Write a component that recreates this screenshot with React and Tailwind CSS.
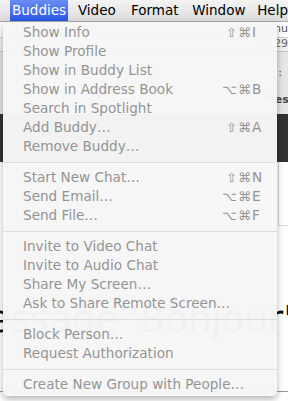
import React from "react";

const font = { fontFamily: '"DejaVu Sans", "Liberation Sans", sans-serif' };

const sections = [
  [
    ["Show Info", "⇧⌘", "I"],
    ["Show Profile"],
    ["Show in Buddy List"],
    ["Show in Address Book", "⌥⌘", "B"],
    ["Search in Spotlight"],
    ["Add Buddy…", "⇧⌘", "A"],
    ["Remove Buddy…"],
  ],
  [
    ["Start New Chat…", "⇧⌘", "N"],
    ["Send Email…", "⌥⌘", "E"],
    ["Send File…", "⌥⌘", "F"],
  ],
  [
    ["Invite to Video Chat"],
    ["Invite to Audio Chat"],
    ["Share My Screen…"],
    ["Ask to Share Remote Screen…"],
  ],
  [["Block Person…"], ["Request Authorization"]],
  [["Create New Group with People…"]],
];

function Item({ label, mods, key2 }) {
  return (
    <div className="flex h-[19px] items-center pl-[20px] pr-[13px] text-[13.6px] leading-none text-[#949494]">
      <span className="flex-1 whitespace-nowrap">{label}</span>
      {mods && (
        <span className="flex items-center">
          <span className="text-[13px] tracking-[1px]">{mods}</span>
          <span className="w-[12px] text-left text-[13.6px]">{key2}</span>
        </span>
      )}
    </div>
  );
}

export default function App() {
  return (
    <div className="relative h-[401px] w-[288px] overflow-hidden bg-white" style={font}>
      {/* menubar */}
      <div className="flex h-[22px] items-stretch border-b border-[#a8a8a8] bg-gradient-to-b from-[#f4f4f4] to-[#dcdcdc] text-[13.5px] leading-none text-black">
        <div className="ml-[10px] flex w-[63px] items-center bg-gradient-to-b from-[#6b8cf3] to-[#2c55e7] pl-[2px] text-white">
          Buddies
        </div>
        <div className="flex w-[57px] items-center pl-[10px]">Video</div>
        <div className="flex w-[66px] items-center pl-[10px]">Format</div>
        <div className="flex w-[70px] items-center pl-[10px]">Window</div>
        <div className="flex items-center pl-[10px]">Help</div>
      </div>

      {/* page behind the menu */}
      <div className="flex flex-col">
        <div className="flex h-[16px] items-center justify-end overflow-hidden whitespace-nowrap border-b border-[#cfcfcf] text-[11px] text-[#555]">
          Menu
        </div>
        <div className="flex h-[14px] items-center justify-end overflow-hidden whitespace-nowrap border-b border-[#c4c4c4] bg-[#efefef] text-[11px] text-[#666]">
          1229
        </div>
        <div className="flex h-[62px] flex-col items-end justify-end overflow-hidden bg-[#e6e6e6] pb-[6px] text-[11px] text-[#444]">
          <div className="mr-[6px] whitespace-nowrap">:</div>
          <div className="mr-[-30px] mt-[10px] whitespace-nowrap font-bold">Message</div>
        </div>
        <div className="h-[48px] bg-[#333333]" />
        <div className="flex h-[64px] justify-end">
          <div className="h-[64px] w-[10px] border-b border-l border-[#dadada]" />
        </div>
        <div className="ml-[-44px] mt-[75px] whitespace-nowrap text-[37px] leading-none text-[#111]">
          Message 'Bonjour'
        </div>
        <div className="mt-[53px] border-b border-[#9a9a9a]" />
        <div className="ml-[4px] mt-[8px] whitespace-nowrap text-[16px] font-bold text-black">
          Solutions
        </div>
      </div>

      {/* dropdown menu */}
      <div className="absolute left-[3px] top-[22px] w-[274px] rounded-b-[5px] bg-[#f6f6f6]/[0.98] pb-[2px] pt-[1px] shadow-[0_3px_7px_rgba(0,0,0,0.3)]">
        {sections.map((sec, i) => (
          <div key={i}>
            {i > 0 && (
              <div className="flex h-[12px] items-center">
                <div className="h-px w-full bg-[#dcdcdc]" />
              </div>
            )}
            {sec.map(([label, mods, k]) => (
              <Item key={label} label={label} mods={mods} key2={k} />
            ))}
          </div>
        ))}
      </div>
    </div>
  );
}
